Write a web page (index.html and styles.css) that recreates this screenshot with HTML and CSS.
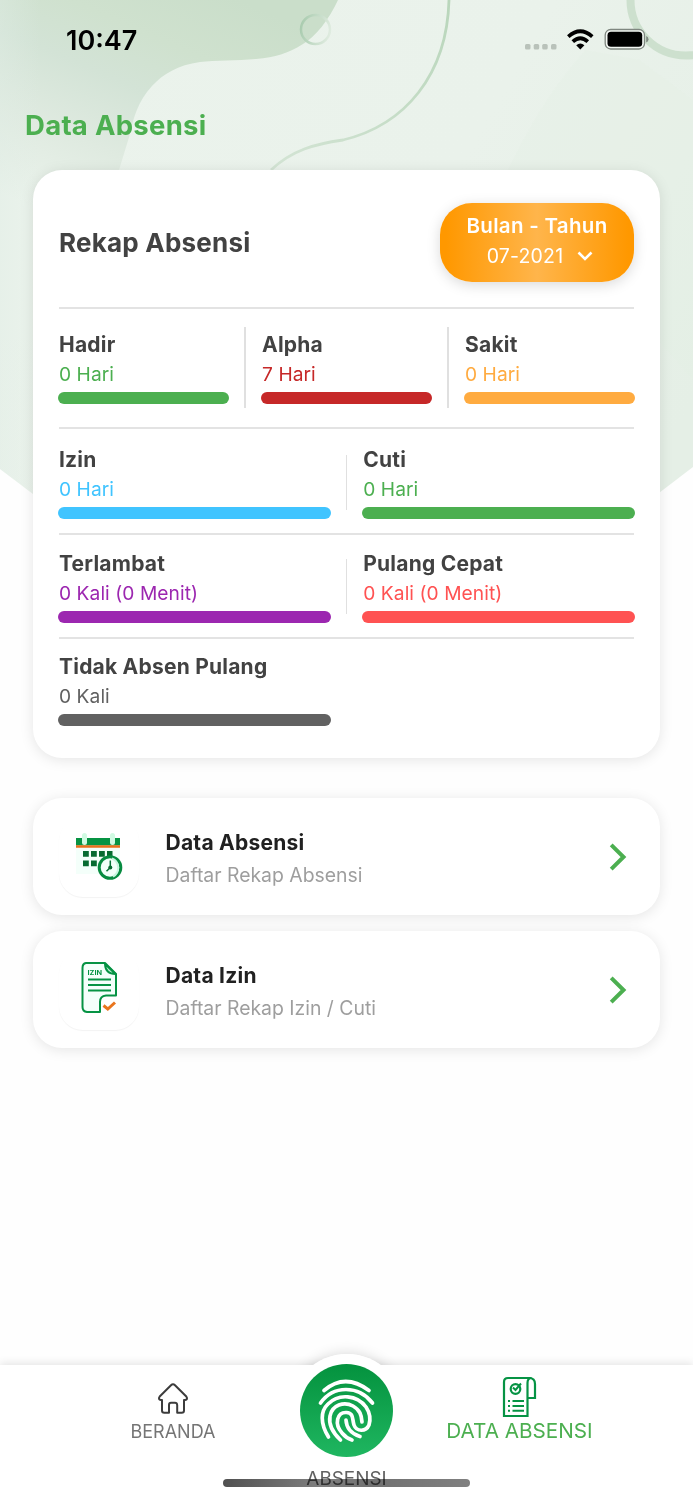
FILE: index.html
```html
<!DOCTYPE html>
<html lang="id">
<head>
<meta charset="utf-8">
<title>Data Absensi</title>
<link rel="stylesheet" href="styles.css">
</head>
<body>
<div class="screen">
  <svg class="backdrop" width="693" height="500" viewBox="0 0 693 500" fill="none">
    <defs>
      <linearGradient id="base" x1="0" y1="0" x2="693" y2="400" gradientUnits="userSpaceOnUse"><stop stop-color="#ebf3ec"/><stop offset=".6" stop-color="#eaf2eb"/><stop offset="1" stop-color="#e5efe6"/></linearGradient>
      <linearGradient id="blob" x1="240" y1="0" x2="130" y2="250" gradientUnits="userSpaceOnUse"><stop stop-color="#cadeca"/><stop offset=".25" stop-color="#cfe1ce"/><stop offset=".45" stop-color="#d3e3d6"/><stop offset=".7" stop-color="#dfeae0"/><stop offset="1" stop-color="#ebf3ec"/></linearGradient>
      <linearGradient id="edge" x1="0" y1="0" x2="40" y2="0" gradientUnits="userSpaceOnUse"><stop stop-color="#dfece4" stop-opacity=".4"/><stop offset="1" stop-color="#dfece4" stop-opacity="0"/></linearGradient>
      <linearGradient id="ring" x1="300" y1="25" x2="332" y2="32" gradientUnits="userSpaceOnUse"><stop stop-color="#a8cbae"/><stop offset="1" stop-color="#e2ede2"/></linearGradient>
      <linearGradient id="line" x1="450" y1="0" x2="280" y2="170" gradientUnits="userSpaceOnUse"><stop stop-color="#b9d6bb"/><stop offset="1" stop-color="#d3e4d4"/></linearGradient>
    </defs>
    <path d="M0 0H693V467L346 732L0 469Z" fill="url(#base)"/>
    <path d="M0 0H338C329 20 315 37 303 44C287 54 276 57 256 59C237 61 215 60 200 62C178 65 163 74 152 86C138 101 133 119 130 134L119 170L80 340H0Z" fill="url(#blob)"/>
    <path d="M0 0H40V499L0 469Z" fill="url(#edge)"/>
    <path d="M585 50C555 85 535 115 508 170L693 380V100L640 60Z" fill="#e5eee5" opacity=".25"/>
    <circle cx="315.500" cy="29.500" r="14.500" stroke="url(#ring)" stroke-width="2.500"/>
    <path d="M449 0C447 75 405 125 343 140C315 144 292 150 271 170" stroke="url(#line)" stroke-width="2.800"/>
    <circle cx="686" cy="0" r="55.500" stroke="#cde0ce" stroke-width="8"/>
  </svg>

  <header class="statusbar">
    <span class="clock">10:47</span>
    <svg width="126" height="26" viewBox="0 0 126 26">
      <g fill="#b9c2ba"><rect x="1" y="17" width="5.500" height="5.500" rx="1.500"/><rect x="9.700" y="17" width="5.500" height="5.500" rx="1.500"/><rect x="18.200" y="17" width="5.500" height="5.500" rx="1.500"/><rect x="27" y="17" width="5.500" height="5.500" rx="1.500"/></g>
      <g fill="none" stroke="#000" stroke-width="3.700"><path d="M44.300 9.600Q56.300-1.200 68.300 9.600"/><path d="M48.800 14.700Q56.300 7.700 63.800 14.700"/></g>
      <path d="M52.200 18.300Q56.300 14.600 60.400 18.300L56.300 22.600Z"/>
      <rect x="81.200" y="2.500" width="39.300" height="19.500" rx="5.500" fill="#f4f8f4" stroke="#7f8780" stroke-width="1.300"/>
      <rect x="83.500" y="4.800" width="34.700" height="15" rx="3.500"/>
      <path d="M122.200 9Q124.500 10 124.500 12.300T122.200 15.500Z" fill="#7f8780"/>
    </svg>
  </header>
  <h1 class="title">Data Absensi</h1>

  <section class="card recap">
    <div class="recap-head">
      <h2>Rekap Absensi</h2>
      <div class="period">
        <strong>Bulan - Tahun</strong>
        <span class="period-value">07-2021
          <svg width="16" height="12" viewBox="0 0 16 12" fill="none"><path d="M1.500 2.500L8 9L14.500 2.500" stroke="#fff" stroke-width="2.600"/></svg>
        </span>
      </div>
    </div>
    <div class="row first">
      <div class="stat green"><b>Hadir</b><span>0 Hari</span><i></i></div>
      <div class="rule"></div>
      <div class="stat red"><b>Alpha</b><span>7 Hari</span><i></i></div>
      <div class="rule"></div>
      <div class="stat orange"><b>Sakit</b><span>0 Hari</span><i></i></div>
    </div>
    <div class="row second">
      <div class="stat blue"><b>Izin</b><span>0 Hari</span><i></i></div>
      <div class="rule"></div>
      <div class="stat green"><b>Cuti</b><span>0 Hari</span><i></i></div>
    </div>
    <div class="row third">
      <div class="stat purple"><b>Terlambat</b><span>0 Kali (0 Menit)</span><i></i></div>
      <div class="rule"></div>
      <div class="stat coral"><b>Pulang Cepat</b><span>0 Kali (0 Menit)</span><i></i></div>
    </div>
    <div class="row fourth">
      <div class="stat gray"><b>Tidak Absen Pulang</b><span>0 Kali</span><i></i></div>
      <div class="rule blank"></div>
      <div class="stat"></div>
    </div>
  </section>

  <section class="card item">
    <div class="tile">
      <svg width="80" height="80" viewBox="0 0 80 80">
        <path d="M17 30H61V57H17Z" fill="#f4fffa"/>
        <path d="M17 21H61V28.500H17Z" fill="#079343"/>
        <path d="M17 28.300H61V30.800H17Z" fill="#e9701c"/>
        <path d="M25.500 18.500V25.500M53.500 18.500V25.500" stroke="#d0fae2" stroke-width="5" stroke-linecap="round"/>
        <path d="M24 34h5.800v5.800h-5.800zM32 34h5.800v5.800h-5.800zM40 34h5.800v5.800h-5.800zM48 34h5.500v5.800h-5.500zM24 43.500h5.800v5.800h-5.800zM32 43.500h5.800v5.800h-5.800z" fill="#076b31"/>
        <circle cx="51" cy="50.500" r="10.800" fill="#f2fff9" stroke="#078b40" stroke-width="3"/>
        <path d="M53 41.500A10 10 0 0 1 54 59.500" fill="none" stroke="#c8f5df" stroke-width="2"/>
        <path d="M51.300 43.500V50.500L47.500 54.300" fill="none" stroke="#087438" stroke-width="1.500"/><circle cx="51.300" cy="50.500" r="2" fill="#076b31"/>
      </svg>
    </div>
    <div class="item-text"><b>Data Absensi</b><span>Daftar Rekap Absensi</span></div>
    <svg width="20" height="30" viewBox="0 0 20 30" fill="none"><path d="M2.200 2.800L14.500 15L2.200 27.200" stroke="#4caf50" stroke-width="4"/></svg>
  </section>

  <section class="card item">
    <div class="tile">
      <svg width="80" height="80" viewBox="0 0 80 80" fill="none">
        <path d="M27 13H46L57 24V45.500H47Q41 46 41 52V62H28Q23.500 61.500 23.500 57V18Q23.500 13.500 27 13Z" fill="#f4fffb" stroke="#069344" stroke-width="2" stroke-linejoin="round"/>
        <path d="M46 14Q46.500 24 56.500 24Z" fill="#bfeed3" stroke="#069344" stroke-width="2" stroke-linejoin="round"/>
        <path d="M29 29.500H52M29 35H52M29 40.500H52" stroke="#069344" stroke-width="1.800"/>
        <path d="M44.500 55.500L48.800 59L56 52.500" stroke="#e9751d" stroke-width="3"/>
        <text x="28.500" y="25" class="izin-label" textLength="14.500" lengthAdjust="spacingAndGlyphs">IZIN</text>
      </svg>
    </div>
    <div class="item-text"><b>Data Izin</b><span>Daftar Rekap Izin / Cuti</span></div>
    <svg width="20" height="30" viewBox="0 0 20 30" fill="none"><path d="M2.200 2.800L14.500 15L2.200 27.200" stroke="#4caf50" stroke-width="4"/></svg>
  </section>

  <div class="halo"></div>
  <nav class="tabs">
    <div class="tab home">
      <svg width="32" height="34" viewBox="0 0 32 34" fill="none" stroke="#3c3c3c" stroke-width="2" stroke-linejoin="round"><path d="M16 2.300Q17 2.300 18 3.300L29.300 14.500Q31.300 17.500 28 18H27V28.500Q27 30.800 24.700 30.800H20.200V23Q20 20.800 18 20.800H14Q12 20.800 12 23V30.800H7.300Q5 30.800 5 28.500V18H4Q.7 17.500 2.700 14.500L14 3.300Q15 2.300 16 2.300Z"/></svg>
      <span>BERANDA</span>
    </div>
    <div class="tab scan">
      <div class="bump">
        <svg width="93" height="93" viewBox="0 0 93 93" fill="none">
          <defs><linearGradient id="g" x2="0" y2="1"><stop stop-color="#04923e"/><stop offset="1" stop-color="#1fb660"/></linearGradient></defs>
          <circle cx="46.500" cy="46.500" r="46.500" fill="url(#g)"/>
          <g stroke="#fff" stroke-width="3.700" stroke-linecap="round">
            <path d="M24 26.500Q45 8.500 69 26.500"/>
            <path d="M20.500 39Q30 25.500 46 25.500T72.500 39"/>
            <path d="M28.500 73C20 59 20.500 47 28 40C39 29 57 31 66 43C70 49 70.500 56 69 61C66 68 56.500 68 54 61C52 55 54 49 46.500 48.500C37 48 34 60 42 69Q46 74 52 76"/>
            <path d="M40.500 76C32 68 28.500 60 30 52C32 41 44 37 53 42C60 46 61.500 51 62 58"/>
            <path d="M46 56C46.500 65 52 70 60 72.500"/>
          </g>
        </svg>
      </div>
      <span class="scan-label">ABSENSI</span>
    </div>
    <div class="tab report">
      <svg width="36" height="42" viewBox="0 0 36 42" fill="none" stroke="#069344" stroke-width="2.200">
        <path d="M6 2H27Q33 2 33 8V22H25.500V40H2V6Q2 2 6 2ZM25.500 22V7Q25.500 2 29.500 2"/>
        <circle cx="13.500" cy="13" r="4.800"/><path d="M11 11.500L13.500 14L19 7.500" stroke-width="2"/>
        <path d="M6 25H8M10.500 25H22M6 30H8M10.500 30H22M6 34.700H8M10.500 34.700H22" stroke-width="2"/>
      </svg>
      <span>DATA ABSENSI</span>
    </div>
    <div class="home-indicator"></div>
  </nav>
</div>
</body>
</html>
```
FILE: styles.css
```css
* { box-sizing: border-box; }
body { margin: 0; font-family: Inter, "Liberation Sans", sans-serif; background: #fefefe; }
.screen { position: relative; width: 693px; height: 1500px; display: flex; flex-direction: column; overflow: hidden; }
.screen > * { position: relative; flex-shrink: 0; }
.screen > .backdrop { position: absolute; left: 0; top: 0; }
svg { display: block; }
h1, h2 { margin: 0; }

.statusbar { height: 79px; padding: 0 43px 0 66px; display: flex; align-items: center; justify-content: space-between; }
.clock { font-size: 27px; font-weight: 600; padding-top: 1px; }
.title { height: 91px; line-height: 92px; padding-left: 25px; color: #4caf50; font-size: 27.5px; font-weight: 700; letter-spacing: .28px; }

.card { width: 627px; margin-left: 33px; background: #fff; border-radius: 29px; box-shadow: 0 2px 14px rgba(0, 0, 0, .1); }
.recap { height: 588px; padding: 0 25px; color: #424242; }
.recap-head { height: 137px; display: flex; align-items: center; justify-content: space-between; padding: 7px 1px 0 1px; }
.recap-head h2 { font-size: 26px; font-weight: 700; letter-spacing: .22px; }
.period { width: 194px; height: 79px; border-radius: 32px; padding-top: 8px; display: flex; flex-direction: column; align-items: center; color: #fff; background: linear-gradient(90deg, #ff9800 3%, #ffb54b 50%, #ff9800 97%); box-shadow: 0 3px 14px rgba(0, 0, 0, .15); }
.period strong { font-size: 20.5px; line-height: 30px; font-weight: 600; letter-spacing: .3px; }
.period-value { display: flex; align-items: center; gap: 14px; font-size: 19.5px; line-height: 30px; letter-spacing: .2px; padding-left: 6px; }

.row { display: flex; background: linear-gradient(#e3e3e3, #e3e3e3) 1px 0 / 575px 2px no-repeat; padding-top: 2px; }
.rule { width: 2px; margin: 0 15px; background: #e0e0e0; }
.rule.blank { visibility: hidden; }
.first { height: 120px; padding-top: 22px; }
.first .rule { height: 81px; margin-top: -2px; }
.second { height: 106px; padding-top: 17px; }
.second .rule, .third .rule { height: 55px; margin-top: 11px; width: 1.500px; }
.third { height: 104px; padding-top: 15px; }
.fourth { padding-top: 14px; }
.stat { flex: 1 1 0; min-width: 0; display: flex; flex-direction: column; }
.stat b { padding-left: 1px; color: #424242; font-size: 21px; line-height: 32px; font-weight: 700; letter-spacing: .22px; }
.stat span { padding-left: 1px; margin-top: -1px; font-size: 19.2px; line-height: 28px; letter-spacing: .06px; }
.stat i { height: 11.500px; margin-top: 4px; border-radius: 6px; background: currentColor; }
.green { color: #4caf50; }
.red { color: #c62828; }
.orange { color: #ffab40; }
.blue { color: #40c4ff; }
.purple { color: #9c27b0; }
.coral { color: #ff5252; }
.gray { color: #616161; }

.item { height: 117px; margin-top: 40px; padding: 0 31px 0 26px; display: flex; align-items: center; }
.item + .item { margin-top: 16px; }
.tile { width: 80px; height: 80px; border-radius: 24px; box-shadow: 0 1px 1px rgba(0, 0, 0, .05); }
.izin-label { font-size: 6.500px; font-weight: 700; fill: #069344; }
.item-text { flex: 1; margin-left: 26.500px; display: flex; flex-direction: column; padding-top: 5px; }
.item-text b { font-size: 21px; line-height: 33px; font-weight: 700; color: #212121; letter-spacing: .25px; }
.item-text span { font-size: 19.400px; line-height: 33px; color: #9e9e9e; letter-spacing: 0; }

.tabs { height: 135px; display: flex; background: #fff; box-shadow: 0 -2px 8px rgba(0, 0, 0, .1); }
/* Shadow behind the raised scan button, hidden under the bar below its top edge */
.halo { width: 114px; height: 114px; margin: auto auto -103px; border-radius: 50%; box-shadow: 0 0 14px rgba(0, 0, 0, .16); }
.tab { display: flex; flex-direction: column; align-items: center; }
.home { width: 174px; margin-left: 86px; padding-top: 17px; color: #757575; font-size: 18px; }
.home span { line-height: 26px; margin-top: 3px; }
.scan { width: 173px; color: #616161; font-size: 18.900px; }
.bump { width: 114px; height: 114px; margin-top: -11.500px; display: flex; align-items: center; justify-content: center; border-radius: 50%; background: #fff; }
.scan-label { line-height: 22px; }
.report { width: 173px; padding-top: 11px; color: #4caf50; font-size: 20.700px; }
.report span { line-height: 26px; }
.home-indicator { position: absolute; left: 223px; top: 114px; width: 247px; height: 8px; border-radius: 4px; background: linear-gradient(90deg, #505050, #808080 40%, #707070 60%, #808080); mix-blend-mode: multiply; }
```
